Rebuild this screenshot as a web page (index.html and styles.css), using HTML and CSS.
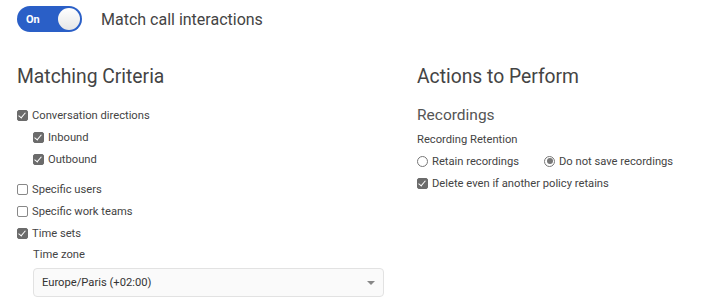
FILE: index.html
```html
<!DOCTYPE html>
<html lang="en">
<head>
    <meta charset="UTF-8">
    <title>Policy</title>
    <link rel="stylesheet" href="styles.css">
</head>
<body>
    <div class="header">
        <div class="toggle">
            <span class="toggle-label">On</span>
            <span class="toggle-knob"></span>
        </div>
        <div class="header-title">Match call interactions</div>
    </div>

    <div class="columns">
        <!-- Left column -->
        <div class="column">
            <h2 class="section-title">Matching Criteria</h2>
            <label class="check"><span class="box checked"></span>Conversation directions</label>
            <div class="indent">
                <label class="check"><span class="box checked"></span>Inbound</label>
                <label class="check"><span class="box checked"></span>Outbound</label>
            </div>
            <div class="spacer"></div>
            <label class="check"><span class="box"></span>Specific users</label>
            <label class="check"><span class="box"></span>Specific work teams</label>
            <label class="check"><span class="box checked"></span>Time sets</label>
            <div class="indent">
                <div class="field-label">Time zone</div>
                <div class="select">
                    <span>Europe/Paris (+02:00)</span>
                    <span class="caret"></span>
                </div>
            </div>
        </div>

        <!-- Right column -->
        <div class="column">
            <h2 class="section-title">Actions to Perform</h2>
            <h3 class="sub-title">Recordings</h3>
            <div class="field-label">Recording Retention</div>
            <div class="radio-row">
                <label class="check radio-item"><span class="radio"></span>Retain recordings</label>
                <label class="check"><span class="radio selected"></span>Do not save recordings</label>
            </div>
            <label class="check"><span class="box checked"></span>Delete even if another policy retains</label>
        </div>
    </div>
</body>
</html>
```

FILE: styles.css
```css
body {
    margin: 0;
    padding: 6px 17px 0;
    font-family: Roboto, "Liberation Sans", sans-serif;
    color: #4a4a4a;
    background: #fff;
}

.header {
    display: flex;
    align-items: center;
    gap: 19px;
    height: 26px;
}

.toggle {
    width: 65px;
    height: 26px;
    border-radius: 13px;
    background: #2a5fc7;
    display: flex;
    align-items: center;
    justify-content: space-between;
    padding: 0 2px 0 9px;
    box-sizing: border-box;
}

.toggle-label {
    color: #fff;
    font-size: 11px;
    font-weight: 700;
}

.toggle-knob {
    width: 22px;
    height: 22px;
    border-radius: 50%;
    background: linear-gradient(180deg, #ffffff, #e6e6e6);
}

.header-title {
    font-size: 16px;
    color: #444;
}

.columns {
    display: flex;
    margin-top: 31px;
}

.column {
    width: 400px;
    flex-shrink: 0;
}

.column + .column {
    width: auto;
    flex: 1;
}

.section-title {
    margin: 0 0 13px;
    font-size: 19.3px;
    font-weight: 400;
    color: #444;
    line-height: 28px;
}

.sub-title {
    margin: 0 0 3px;
    font-size: 15.5px;
    font-weight: 400;
    color: #555;
    line-height: 22px;
}

.check {
    display: flex;
    align-items: center;
    gap: 4px;
    font-size: 11.2px;
    height: 22px;
    color: #444;
}

.indent {
    padding-left: 16px;
}

.spacer {
    height: 8px;
}

.box {
    width: 9px;
    height: 9px;
    border: 1px solid #888;
    border-radius: 2px;
    background: #fff;
    position: relative;
}

.box.checked {
    background: #6b6b6b;
    border-color: #6b6b6b;
}

.box.checked::after {
    content: "";
    position: absolute;
    left: 2px;
    top: 0;
    width: 3px;
    height: 6px;
    border: solid #fff;
    border-width: 0 1.5px 1.5px 0;
    transform: rotate(40deg);
}

.radio {
    width: 9px;
    height: 9px;
    border: 1px solid #777;
    border-radius: 50%;
    background: #fff;
    position: relative;
}

.radio.selected::after {
    content: "";
    position: absolute;
    left: 1.5px;
    top: 1.5px;
    width: 6px;
    height: 6px;
    border-radius: 50%;
    background: #777;
}

.radio-row {
    display: flex;
}

.radio-item {
    width: 127px;
}

.field-label {
    font-size: 11.2px;
    height: 21px;
    line-height: 21px;
    color: #444;
}

.select {
    margin-top: 3px;
    width: 351px;
    height: 29px;
    box-sizing: border-box;
    border: 1px solid #e2e2e2;
    border-radius: 4px;
    background: #fafafa;
    display: flex;
    align-items: center;
    justify-content: space-between;
    padding: 0 8px 0 8px;
    font-size: 11.2px;
    color: #333;
}

.caret {
    width: 0;
    height: 0;
    border-left: 4px solid transparent;
    border-right: 4px solid transparent;
    border-top: 4px solid #888;
}
```
